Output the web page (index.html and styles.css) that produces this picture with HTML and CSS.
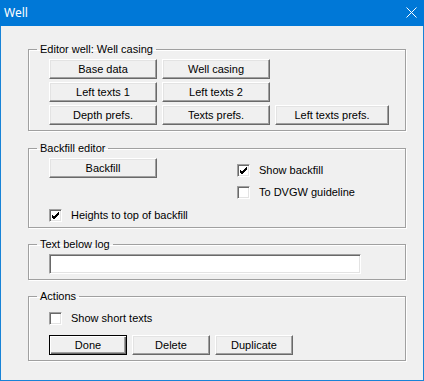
FILE: index.html
```html
<!DOCTYPE html>
<html lang="en">
<head>
  <meta charset="UTF-8">
  <title>Well</title>
  <link rel="stylesheet" href="styles.css">
</head>
<body>
  <div class="window">
    <div class="titlebar">
      <span class="title">Well</span>
      <svg class="close" width="11" height="11" viewBox="0 0 11 11">
        <path d="M0.5 0.5 L10.5 10.5 M10.5 0.5 L0.5 10.5" stroke="#fff" stroke-width="1"/>
      </svg>
    </div>

    <div class="content">
      <!-- Editor well -->
      <fieldset class="group group-editor">
        <legend>Editor well: Well casing</legend>
        <div class="button-grid">
          <button>Base data</button>
          <button>Well casing</button>
          <span></span>
          <button>Left texts 1</button>
          <button>Left texts 2</button>
          <span></span>
          <button>Depth prefs.</button>
          <button>Texts prefs.</button>
          <button>Left texts prefs.</button>
        </div>
      </fieldset>

      <!-- Backfill editor -->
      <fieldset class="group group-backfill">
        <legend>Backfill editor</legend>
        <div class="backfill-top">
          <div class="backfill-left">
            <button class="btn-backfill">Backfill</button>
          </div>
          <div class="backfill-right">
            <label class="check"><span class="box checked"><svg width="9" height="9" viewBox="0 0 9 9"><path d="M1 4 L3 6 L8 1 M1 5 L3 7 L8 2 M1 6 L3 8 L8 3" stroke="#000" stroke-width="1" fill="none"/></svg></span>Show backfill</label>
            <label class="check"><span class="box"></span>To DVGW guideline</label>
          </div>
        </div>
        <label class="check check-heights"><span class="box checked"><svg width="9" height="9" viewBox="0 0 9 9"><path d="M1 4 L3 6 L8 1 M1 5 L3 7 L8 2 M1 6 L3 8 L8 3" stroke="#000" stroke-width="1" fill="none"/></svg></span>Heights to top of backfill</label>
      </fieldset>

      <!-- Text below log -->
      <fieldset class="group group-text">
        <legend>Text below log</legend>
        <input type="text" class="text-input">
      </fieldset>

      <!-- Actions -->
      <fieldset class="group group-actions">
        <legend>Actions</legend>
        <label class="check"><span class="box"></span>Show short texts</label>
        <div class="action-buttons">
          <button class="default">Done</button>
          <button>Delete</button>
          <button>Duplicate</button>
        </div>
      </fieldset>
    </div>
  </div>
</body>
</html>
```

FILE: styles.css
```css
body {
  margin: 0;
  background-color: #f0f0f0;
  font-family: "Liberation Sans", Arial, sans-serif;
  font-size: 11px;
  color: #000;
}
.window {
  width: 424px;
  height: 381px;
  box-sizing: border-box;
  border: 1px solid #1883d7;
  border-top: none;
  background-color: #f0f0f0;
}
.titlebar {
  height: 26px;
  margin: 0 -1px;
  background-color: #0078d7;
  display: flex;
  align-items: center;
  justify-content: space-between;
  padding: 0 7px 0 4px;
}
.title {
  color: #fff;
  font-family: "Noto Sans", "Open Sans", sans-serif;
  font-size: 12px;
  margin-top: -1px;
}
.close {
  margin-top: -1px;
}
.content {
  padding: 17px 17px 0 27px;
}
.group {
  margin: 0 0 10px 0;
  border: 1px solid #a0a0a0;
  box-shadow: inset 1px 1px #fff, 1px 1px #fff;
  padding: 3px 20px 5px 20px;
  min-width: 0;
}
.group legend {
  margin-left: -12px;
  padding: 0 3px;
  line-height: 13px;
}
.group-editor {
  margin-bottom: 11px;
}
button {
  font-family: "Liberation Sans", Arial, sans-serif;
  font-size: 11px;
  color: #000;
  height: 20px;
  padding: 0;
  background-color: #f0f0f0;
  border: 1px solid;
  border-color: #fff #696969 #696969 #fff;
  box-shadow: inset -1px -1px #a0a0a0, inset 1px 1px #e3e3e3;
}
button.default {
  border-color: #000;
  box-shadow: inset 1px 1px #fff, inset -1px -1px #696969, inset -2px -2px #a0a0a0;
}
.button-grid {
  display: grid;
  grid-template-columns: 108px 108px 114px;
  grid-auto-rows: 20px;
  column-gap: 5px;
  row-gap: 3px;
}
.backfill-top {
  display: flex;
}
.backfill-left {
  width: 188px;
}
.btn-backfill {
  width: 108px;
}
.backfill-right {
  padding-top: 6px;
  display: flex;
  flex-direction: column;
  gap: 9px;
}
.check {
  display: flex;
  align-items: center;
  height: 13px;
  line-height: 13px;
}
.box {
  width: 13px;
  height: 13px;
  box-sizing: border-box;
  background-color: #fff;
  border: 1px solid;
  border-color: #a0a0a0 #fff #fff #a0a0a0;
  box-shadow: inset 1px 1px #696969, inset -1px -1px #e3e3e3;
  margin-right: 9px;
  display: flex;
  align-items: center;
  justify-content: center;
}
.check-heights {
  margin-top: 10px;
}
.text-input {
  display: block;
  width: 312px;
  height: 20px;
  box-sizing: border-box;
  margin-top: 0;
  border: 1px solid;
  border-color: #a0a0a0 #fff #fff #a0a0a0;
  box-shadow: inset 1px 1px #696969, inset -1px -1px #e3e3e3;
  background-color: #fff;
  padding: 0 3px;
  font-family: "Liberation Sans", Arial, sans-serif;
  font-size: 11px;
}
.group-actions .check {
  margin-top: 6px;
}
.action-buttons {
  display: flex;
  gap: 5px;
  margin-top: 10px;
}
.action-buttons button {
  width: 78px;
}
```
